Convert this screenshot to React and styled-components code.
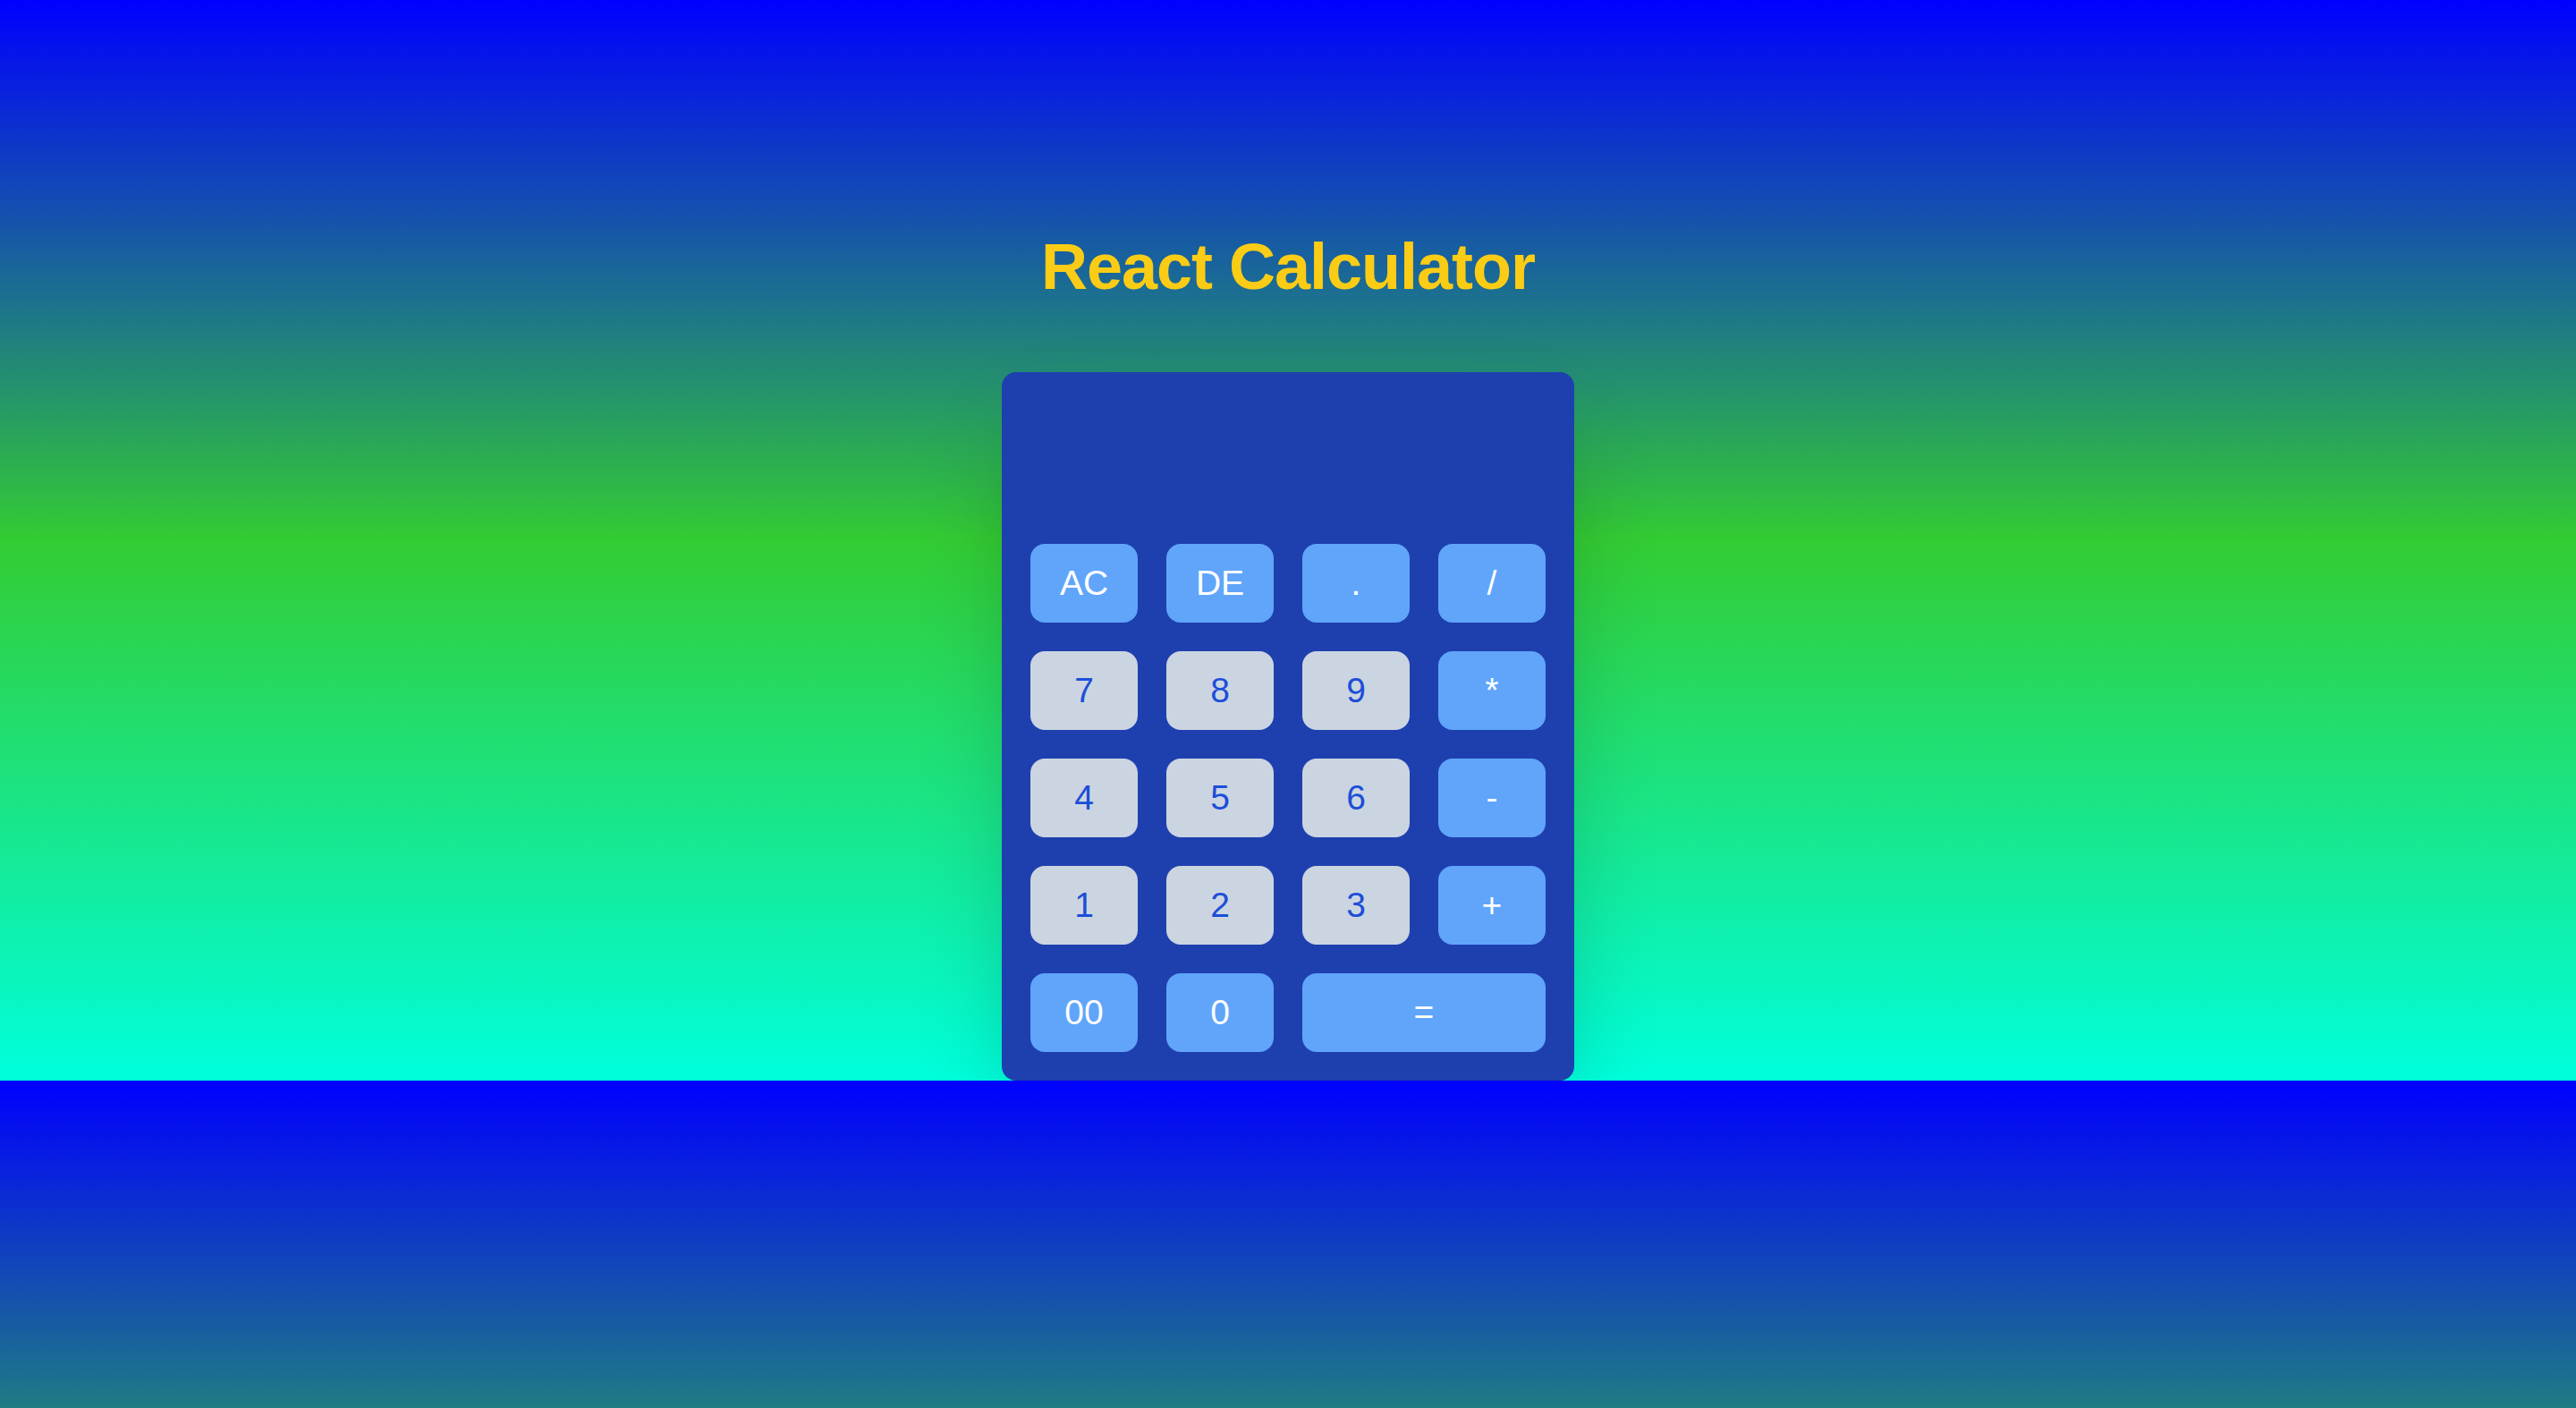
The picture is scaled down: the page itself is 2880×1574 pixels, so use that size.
import React, { useState } from "react";
import styled, { createGlobalStyle } from "styled-components";

const GlobalStyle = createGlobalStyle`
    html, body {
        margin: 0;
        padding: 0;
    }
    body {
        background: linear-gradient(to bottom, #0000ff, #33cc33, #00ffdd);
        font-family: "Liberation Sans", Arial, sans-serif;
    }
`

const Page = styled.div`
    display: flex;
    flex-direction: column;
    align-items: center;
    padding-top: 258px;
`

const Title = styled.h1`
    margin: 0 0 78px 0;
    font-size: 72px;
    line-height: 80px;
    font-weight: 700;
    color: #facc15;
    letter-spacing: -1px;
`

const Calculator = styled.div`
    width: 640px;
    box-sizing: border-box;
    padding: 32px;
    background-color: #1e40af;
    border-radius: 16px;
    box-shadow: 0 50px 100px -24px rgba(0, 0, 0, 0.25);
`

const Display = styled.div`
    height: 128px;
    margin-bottom: 32px;
    display: flex;
    align-items: flex-end;
    justify-content: flex-end;
    color: #ffffff;
    font-size: 56px;
    overflow: hidden;
`

const Keypad = styled.div`
    display: grid;
    grid-template-columns: repeat(4, 120px);
    grid-auto-rows: 88px;
    gap: 32px;
`

const Key = styled.button`
    border: none;
    border-radius: 16px;
    padding: 0;
    font-family: "Liberation Sans", Arial, sans-serif;
    font-size: 39px;
    cursor: pointer;
    grid-column: ${props => props.wide ? "span 2" : "auto"};
    background-color: ${props => props.op ? "#60a5fa" : "#cbd5e1"};
    color: ${props => props.op ? "#ffffff" : "#1d4ed8"};
    &:hover {
        filter: brightness(1.05);
    }
`

const keys = [
    { label: "AC", op: true },
    { label: "DE", op: true },
    { label: ".", op: true },
    { label: "/", op: true },
    { label: "7" },
    { label: "8" },
    { label: "9" },
    { label: "*", op: true },
    { label: "4" },
    { label: "5" },
    { label: "6" },
    { label: "-", op: true },
    { label: "1" },
    { label: "2" },
    { label: "3" },
    { label: "+", op: true },
    { label: "00", op: true },
    { label: "0", op: true },
    { label: "=", op: true, wide: true },
]

const App = () => {
    const [value, setValue] = useState("")

    const handleKey = (label) => {
        if (label === "AC") return setValue("")
        if (label === "DE") return setValue(value.slice(0, -1))
        if (label === "=") {
            try {
                // eslint-disable-next-line no-new-func
                setValue(String(Function(`return (${value})`)()))
            } catch (e) {
                setValue("")
            }
            return
        }
        setValue(value + label)
    }

    return (
        <Page>
            <GlobalStyle />
            <Title>React Calculator</Title>
            <Calculator>
                <Display>{value}</Display>
                <Keypad>
                    {keys.map((k) => (
                        <Key key={k.label} op={k.op} wide={k.wide} onClick={() => handleKey(k.label)}>
                            {k.label}
                        </Key>
                    ))}
                </Keypad>
            </Calculator>
        </Page>
    );
}

export default App;
